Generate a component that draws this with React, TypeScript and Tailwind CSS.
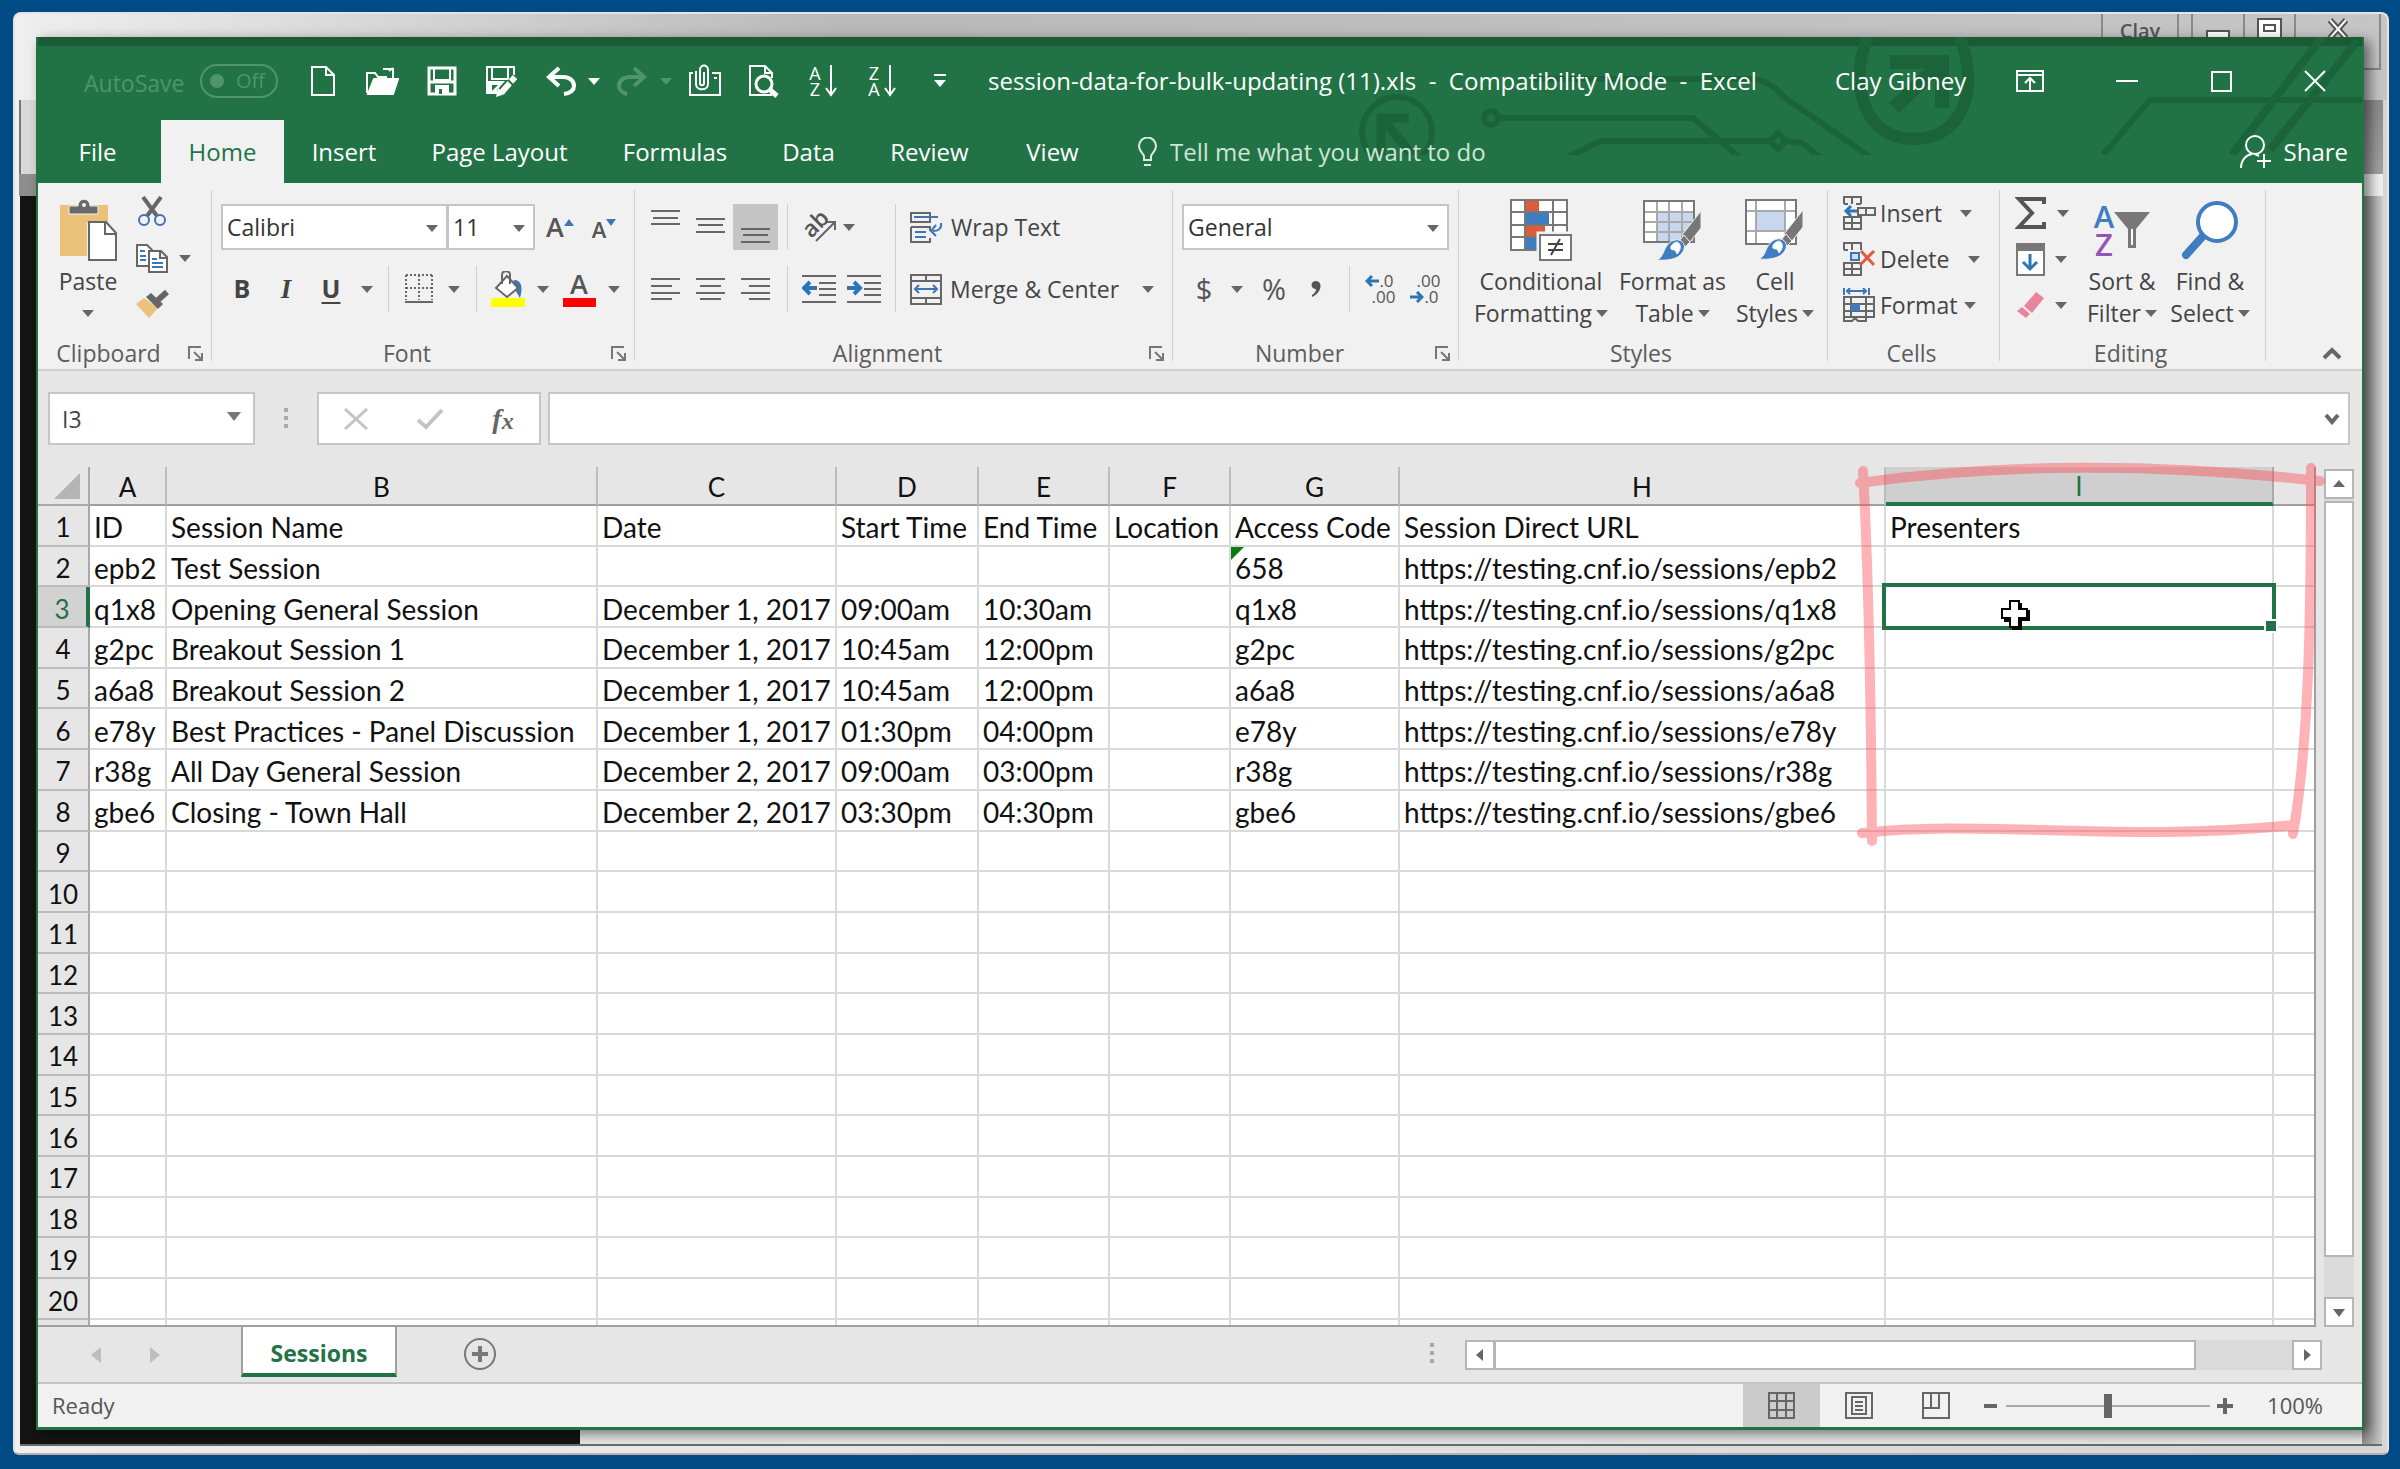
import type { ReactNode } from 'react';

const COLUMNS = [
  { id: 'A', width: 'w-[77px]' },
  { id: 'B', width: 'w-[431px]' },
  { id: 'C', width: 'w-[239px]' },
  { id: 'D', width: 'w-[142px]' },
  { id: 'E', width: 'w-[131px]' },
  { id: 'F', width: 'w-[121px]' },
  { id: 'G', width: 'w-[169px]' },
  { id: 'H', width: 'w-[486px]' },
  { id: 'I', width: 'w-[388px]' },
  { id: '', width: 'w-auto' },
];

const URL_BASE = 'https://testing.cnf.io/sessions/';

const DATA: string[][] = [
  ['ID', 'Session Name', 'Date', 'Start Time', 'End Time', 'Location', 'Access Code', 'Session Direct URL', 'Presenters'],
  ['epb2', 'Test Session', '', '', '', '', '658', URL_BASE + 'epb2'],
  ['q1x8', 'Opening General Session', 'December 1, 2017', '09:00am', '10:30am', '', 'q1x8', URL_BASE + 'q1x8'],
  ['g2pc', 'Breakout Session 1', 'December 1, 2017', '10:45am', '12:00pm', '', 'g2pc', URL_BASE + 'g2pc'],
  ['a6a8', 'Breakout Session 2', 'December 1, 2017', '10:45am', '12:00pm', '', 'a6a8', URL_BASE + 'a6a8'],
  ['e78y', 'Best Practices - Panel Discussion', 'December 1, 2017', '01:30pm', '04:00pm', '', 'e78y', URL_BASE + 'e78y'],
  ['r38g', 'All Day General Session', 'December 2, 2017', '09:00am', '03:00pm', '', 'r38g', URL_BASE + 'r38g'],
  ['gbe6', 'Closing - Town Hall', 'December 2, 2017', '03:30pm', '04:30pm', '', 'gbe6', URL_BASE + 'gbe6'],
];

const ROWS = Array.from({ length: 20 }, (_, i) => i + 1);

const TABS = [
  { name: 'File', width: 'w-[123px] pr-1' },
  { name: 'Home', width: 'w-[123px]' },
  { name: 'Insert', width: 'w-[120px]' },
  { name: 'Page Layout', width: 'w-[191px]' },
  { name: 'Formulas', width: 'w-[160px]' },
  { name: 'Data', width: 'w-[107px]' },
  { name: 'Review', width: 'w-[135px]' },
  { name: 'View', width: 'w-[111px]' },
];

function Caret({ className = 'text-[#666]' }: { className?: string }) {
  return (
    <svg width="12" height="8" viewBox="0 0 12 8" className={`shrink-0 ${className}`}>
      <path d="M0 1h12L6 8z" fill="currentColor" />
    </svg>
  );
}

function Tool({ label, width, className = '', children }: { label: string; width: string; className?: string; children: ReactNode }) {
  return (
    <button aria-label={label} className={`flex h-full shrink-0 items-center justify-center ${width} ${className}`}>
      {children}
    </button>
  );
}

function Rule({ className = '' }: { className?: string }) {
  return <div className={`w-px shrink-0 self-stretch bg-[#cfcfcf] ${className}`} />;
}

function Launcher() {
  return (
    <button aria-label="More options" className="absolute right-2 top-2">
      <svg width="15" height="15" viewBox="0 0 15 15" fill="none" stroke="#777" strokeWidth="2">
        <path d="M1 13V1h12M6 6l7 7M14 7v7H7" />
      </svg>
    </button>
  );
}

function Group({ title, width, launcher, children }: { title: string; width: string; launcher?: boolean; children: ReactNode }) {
  return (
    <>
      <section aria-label={title} className={`flex h-[178px] shrink-0 flex-col ${width}`}>
        <div className="flex-1">{children}</div>
        <div className="relative h-[30px] text-center leading-[30px] text-[#5c5c5c]">
          <span className={launcher ? 'pr-8' : 'pr-1'}>{title}</span>
          {launcher && <Launcher />}
        </div>
      </section>
      <div className="h-[171px] w-px shrink-0 bg-[#cfcfcf]" />
    </>
  );
}

function Combo({ label, value, className }: { label: string; value: string; className: string }) {
  return (
    <div className={`relative h-[46px] shrink-0 border-2 border-[#c6c6c6] bg-white ${className}`}>
      <select aria-label={label} defaultValue={value} className="h-full w-full appearance-none bg-transparent pl-1 text-[#333] outline-none">
        <option>{value}</option>
      </select>
      <Caret className="pointer-events-none absolute right-2 top-[18px] text-[#666]" />
    </div>
  );
}

function BigButton({ icon, top, bottom, width }: { icon: ReactNode; top: string; bottom: string; width: string }) {
  return (
    <button className={`flex shrink-0 flex-col items-center whitespace-nowrap leading-8 text-[#444] ${width}`}>
      <span className="flex h-[75px] items-center pt-1">{icon}</span>
      <span>{top}</span>
      <span className="flex items-center gap-1">
        {bottom}
        <Caret />
      </span>
    </button>
  );
}

function Lines({ d }: { d: string }) {
  return (
    <svg width="45" height="46" viewBox="0 0 45 46" stroke="#666" strokeWidth="2" fill="none">
      <path d={d} />
    </svg>
  );
}

/* ---------- title bar ---------- */

function TitleArt() {
  return (
    <svg
      className="pointer-events-none absolute right-0 top-0"
      width="1008"
      height="118"
      viewBox="1354 37 1008 118"
      fill="none"
      stroke="#1b6439"
      strokeWidth="6"
    >
      <circle cx="1397" cy="132" r="35" />
      <path d="M1381 155v-37h28M1384 121l30 36" strokeWidth="9" />
      <circle cx="1491" cy="118" r="7" />
      <path d="M1499 118h194l47 40M1566 158l34-17h172M1786 141l16 2 18 14M1530 79h224q16 2 30 18l86 60" />
      <path d="M1778 133l8 8-8 8-8-8z" />
      <path d="M1868 37q-12 28-7 56c6 28 24 46 53 46s48-18 53-46q4-30-8-56" strokeWidth="12" />
      <path d="M1890 62h52v46M1938 66l-44 42" strokeWidth="14" />
      <path d="M2103 155l47-55h212" />
      <path d="M2322 37l-90 118M2358 40l-88 110" strokeWidth="8" />
    </svg>
  );
}

function SortArrow() {
  return (
    <svg width="12" height="32" viewBox="0 0 12 32" fill="none" stroke="#fff" strokeWidth="2">
      <path d="M6 0v30M1 23l5 7 5-7" />
    </svg>
  );
}

function TitleBar() {
  return (
    <header className="relative flex h-[74px] shrink-0 items-center pb-1 text-white">
      <div className="flex h-full items-center pl-[46px]">
        <label htmlFor="autosave" className="w-[116px] pt-1 text-[23px] text-[#4f9569]">
          AutoSave
        </label>
        <button id="autosave" className="flex h-[34px] w-[78px] items-center gap-3 rounded-full border-2 border-[#4f9569] pl-2 text-[20px] text-[#4f9569]">
          <span className="size-[14px] shrink-0 rounded-full bg-[#4f9569]" />
          Off
        </button>
        <Tool label="New" width="w-[58px]" className="ml-[16px]">
          <svg width="26" height="32" viewBox="0 0 26 32" fill="none" stroke="#fff" strokeWidth="2">
            <path d="M2 2h14l8 8v20H2zM16 2v8h8" />
          </svg>
        </Tool>
        <Tool label="Open" width="w-[60px]">
          <svg width="34" height="30" viewBox="0 0 34 30" fill="none" stroke="#fff" strokeWidth="2">
            <path d="M2 27V7h8l3 4h9M18 3h10v9M24 5l4-3" />
            <path d="M9 13h24l-5 15H3z" fill="#fff" />
          </svg>
        </Tool>
        <Tool label="Save" width="w-[59px]">
          <svg width="30" height="30" viewBox="0 0 30 30" fill="none" stroke="#fff" strokeWidth="3">
            <path d="M2 2h26v26H2zM2 16h26" />
            <path d="M7 3v11h16V3" strokeWidth="2" />
            <path d="M8 19h14v9H8z" fill="#fff" stroke="none" />
            <path d="M12 23h3v5h-3z" fill="#217346" stroke="none" />
          </svg>
        </Tool>
        <Tool label="Save As" width="w-[59px]">
          <svg width="32" height="32" viewBox="0 0 32 32" fill="none" stroke="#fff" strokeWidth="3">
            <path d="M29 10V2H2v26h10M7 3v11h16V3" strokeWidth="2" />
            <path d="M3 16h17l-8 9v4H3z" fill="#fff" stroke="none" />
            <path d="M7 20h6l-6 6z" fill="#217346" stroke="none" />
            <path d="M30 12L17 27" strokeWidth="6" />
            <path d="M23 15l5 5" stroke="#217346" strokeWidth="2" />
            <path d="M11 32l2-9 7 6z" fill="#fff" stroke="none" />
          </svg>
        </Tool>
        <Tool label="Undo" width="w-[54px]" className="ml-1">
          <svg width="32" height="30" viewBox="0 0 32 30" fill="none" stroke="#fff" strokeWidth="4">
            <path d="M14 2L4 11l10 9M5 11h13c7 0 11 4 11 9 0 4-4 7-10 8" />
          </svg>
        </Tool>
        <Tool label="Undo list" width="w-[12px]">
          <Caret className="text-white" />
        </Tool>
        <Tool label="Redo" width="w-[56px]" className="ml-1">
          <svg width="32" height="30" viewBox="0 0 32 30" fill="none" stroke="#4f9569" strokeWidth="4">
            <path d="M18 2l10 9-10 9M27 11H14C7 11 3 15 3 20c0 4 4 7 8 8" />
          </svg>
        </Tool>
        <Tool label="Redo list" width="w-[12px]">
          <Caret className="text-[#4f9569]" />
        </Tool>
        <Tool label="Attach" width="w-[58px]" className="ml-1">
          <svg width="34" height="34" viewBox="0 0 34 34" fill="none" stroke="#fff" strokeWidth="2">
            <path d="M5 9H2v22h30V9h-8M26 14h3M16 8v11c0 3-4 3-4 0V6c0-6 8-6 8 0v14c0 7-12 7-12 0V7" />
          </svg>
        </Tool>
        <Tool label="Print Preview" width="w-[60px]">
          <svg width="32" height="34" viewBox="0 0 32 34" fill="none" stroke="#fff" strokeWidth="2">
            <path d="M24 31H2V2h15l7 7v5M17 2v7h7" />
            <circle cx="16" cy="20" r="8" strokeWidth="3" fill="#217346" />
            <path d="M21 25l8 7" strokeWidth="5" />
          </svg>
        </Tool>
        <Tool label="Sort Ascending" width="w-[58px]" className="gap-1">
          <span className="flex flex-col text-[18px] leading-4">
            <span>A</span>
            <span>Z</span>
          </span>
          <SortArrow />
        </Tool>
        <Tool label="Sort Descending" width="w-[60px]" className="gap-1">
          <span className="flex flex-col text-[18px] leading-4">
            <span>Z</span>
            <span>A</span>
          </span>
          <SortArrow />
        </Tool>
        <Tool label="Customize toolbar" width="w-[56px]">
          <svg width="12" height="14" viewBox="0 0 12 14" fill="#fff">
            <path d="M0 0h12v2H0zM0 6h12l-6 7z" />
          </svg>
        </Tool>
      </div>
      <h1 className="flex-1 whitespace-pre pl-[20px] text-[24px]">session-data-for-bulk-updating (11).xls  -  Compatibility Mode  -  Excel</h1>
      <span className="w-[145px] text-[24px]">Clay Gibney</span>
      <Tool label="Ribbon Display Options" width="w-[100px]">
        <svg width="28" height="22" viewBox="0 0 28 22" fill="none" stroke="#fff" strokeWidth="2">
          <path d="M1 1h26v20H1zM1 5h26M14 21V9M9 13l5-5 5 5" />
        </svg>
      </Tool>
      <Tool label="Minimize" width="w-[94px]">
        <span className="h-[2px] w-[22px] bg-white" />
      </Tool>
      <Tool label="Maximize" width="w-[94px]">
        <span className="size-[21px] border-2 border-white" />
      </Tool>
      <Tool label="Close" width="w-[94px]">
        <svg width="22" height="22" viewBox="0 0 22 22" stroke="#fff" strokeWidth="2">
          <path d="M1 1l20 20M21 1L1 21" />
        </svg>
      </Tool>
    </header>
  );
}

function TabStrip() {
  return (
    <nav className="relative flex h-[63px] shrink-0 items-stretch text-[24px] text-white">
      {TABS.map((tab) => (
        <button
          key={tab.name}
          className={`shrink-0 whitespace-nowrap ${tab.width} ${tab.name === 'Home' ? 'bg-[#f1f1f1] text-[#217346]' : ''}`}
        >
          {tab.name}
        </button>
      ))}
      <label className="flex flex-1 items-center gap-3 pl-[29px]">
        <svg width="21" height="30" viewBox="0 0 21 30" fill="none" stroke="#dcebe2" strokeWidth="2">
          <path d="M7 23v-4c-1-3-5-5-5-10a8 8 0 0 1 17 0c0 5-4 7-5 10v4zM7 28h7" />
        </svg>
        <input aria-label="Tell me" placeholder="Tell me what you want to do" className="w-[420px] bg-transparent outline-none placeholder:text-[#d0e4d8]" />
      </label>
      <button className="flex items-center gap-3 pr-[14px]">
        <svg width="32" height="34" viewBox="0 0 32 34" fill="none" stroke="#fff" strokeWidth="2">
          <circle cx="15" cy="10" r="9" />
          <path d="M1 33c0-8 5-13 11-14M15 19l4 2M17 26h14M24 19v14" />
        </svg>
        Share
      </button>
    </nav>
  );
}

/* ---------- ribbon ---------- */

function ClipboardGroup() {
  return (
    <Group title="Clipboard" width="w-[173px]" launcher>
      <div className="flex">
        <button className="ml-[17px] flex w-[66px] flex-col items-center leading-8 text-[#444]">
          <span className="flex h-[75px] items-center pt-1">
            <svg width="58" height="62" viewBox="0 0 58 62">
              <path d="M1 6h48v18H28v33H1z" fill="#ecc27b" />
              <path d="M10 15V7h9c0-9 12-9 12 0h8v8z" fill="#6a6a6a" stroke="#f1f1f1" />
              <circle cx="25" cy="6" r="2" fill="#f1f1f1" />
              <path d="M30 23h17l10 11v27H30z" fill="#fff" stroke="#666" strokeWidth="2" />
              <path d="M46 23v12h11" fill="none" stroke="#666" strokeWidth="2" />
            </svg>
          </span>
          <span>Paste</span>
          <Caret className="mt-3 text-[#666]" />
        </button>
        <div className="flex flex-col pl-[8px]">
          <div className="flex h-[42px] items-center">
            <Tool label="Cut" width="w-[46px]">
              <svg width="30" height="31" viewBox="0 0 30 31" fill="none">
                <path d="M6 1l14 19M24 1L10 20" stroke="#666" strokeWidth="4" />
                <circle cx="7" cy="24" r="5" stroke="#3f74b5" strokeWidth="2" />
                <circle cx="23" cy="24" r="5" stroke="#3f74b5" strokeWidth="2" />
              </svg>
            </Tool>
          </div>
          <div className="flex h-[52px] items-center">
            <Tool label="Copy" width="w-[46px]">
              <svg width="32" height="29" viewBox="0 0 32 29" fill="#fff" stroke="#666" strokeWidth="2">
                <path d="M1 1h10l5 5v16H1z" />
                <path d="M13 7h12l6 6v15H13zM24 7v7h7" />
                <path d="M4 7h5M4 12h6M4 16h6M16 15h5M16 19h11M16 23h11" stroke="#3f74b5" />
              </svg>
            </Tool>
            <Caret className="ml-1 text-[#666]" />
          </div>
          <div className="flex h-[40px] items-center">
            <Tool label="Format Painter" width="w-[46px]">
              <svg width="33" height="28" viewBox="0 0 33 28">
                <path d="M0 14l8-6 14 10-9 10z" fill="#ecc27b" />
                <path d="M10 7l5-4 12 11-5 5z" fill="#666" />
                <path d="M31 2l-9 8" stroke="#666" strokeWidth="6" />
              </svg>
            </Tool>
          </div>
        </div>
      </div>
    </Group>
  );
}

function FontGroup() {
  return (
    <Group title="Font" width="w-[422px]" launcher>
      <div className="flex flex-col gap-4 pt-[14px]">
        <div className="flex h-[46px] items-center pl-[9px]">
          <Combo label="Font" value="Calibri" className="w-[227px]" />
          <Combo label="Font size" value="11" className="-ml-px w-[88px]" />
          <Tool label="Increase Font Size" width="w-[46px]" className="pl-1">
            <span className="text-[27px] font-semibold leading-8 text-[#555]">A</span>
            <svg width="10" height="7" viewBox="0 0 10 7" className="mb-6 self-end">
              <path d="M5 0l5 7H0z" fill="#3f74b5" />
            </svg>
          </Tool>
          <Tool label="Decrease Font Size" width="w-[46px]">
            <span className="pt-1 text-[22px] font-semibold leading-8 text-[#555]">A</span>
            <svg width="10" height="7" viewBox="0 0 10 7" className="mb-6 self-end">
              <path d="M0 0h10L5 7z" fill="#3f74b5" />
            </svg>
          </Tool>
        </div>
        <div className="flex h-[46px] items-center pl-[8px] text-[25px] text-[#444]">
          <Tool label="Bold" width="w-[44px]" className="font-bold">
            B
          </Tool>
          <Tool label="Italic" width="w-[44px]" className="font-['Liberation_Serif'] text-[27px] font-bold italic">
            I
          </Tool>
          <Tool label="Underline" width="w-[46px]" className="font-bold underline decoration-2 underline-offset-4">
            U
          </Tool>
          <Tool label="Underline styles" width="w-[26px]">
            <Caret />
          </Tool>
          <Rule className="ml-[8px] mr-[8px]" />
          <Tool label="Borders" width="w-[44px]">
            <svg width="28" height="30" viewBox="0 0 28 30" fill="none" stroke="#666" strokeWidth="2">
              <path d="M1 1h27M1 14h27M1 1v25M14 1v25M27 1v25" strokeDasharray="2 2" />
              <path d="M0 28h28" />
            </svg>
          </Tool>
          <Tool label="Border styles" width="w-[26px]">
            <Caret />
          </Tool>
          <Rule className="ml-[9px] mr-[8px]" />
          <Tool label="Fill Color" width="w-[46px]">
            <svg width="34" height="36" viewBox="0 0 34 36">
              <path d="M23 9c8 0 9 8 6 18-3-5-4-8-8-10z" fill="#3f74b5" />
              <path d="M5 17L16 5l11 12-11 9z" fill="#fff" stroke="#666" strokeWidth="2" />
              <path d="M11 13V4c0-5 8-5 8 0v9" fill="none" stroke="#666" strokeWidth="2" />
              <path d="M0 27h34v9H0z" fill="#ff0" />
            </svg>
          </Tool>
          <Tool label="Fill colors" width="w-[24px]">
            <Caret />
          </Tool>
          <Tool label="Font Color" width="w-[48px]" className="flex-col">
            <span className="h-[27px] text-[27px] font-semibold leading-[25px] text-[#555]">A</span>
            <span className="h-[9px] w-[33px] bg-[#f00]" />
          </Tool>
          <Tool label="Font colors" width="w-[22px]">
            <Caret />
          </Tool>
        </div>
      </div>
    </Group>
  );
}

function AlignmentGroup() {
  return (
    <Group title="Alignment" width="w-[537px]" launcher>
      <div className="flex pt-[14px]">
        <div className="flex w-[252px] flex-col gap-4 pl-[8px]">
          <div className="flex h-[46px]">
            <Tool label="Top Align" width="w-[45px]">
              <Lines d="M8 7h29M10 14h25M8 20h29" />
            </Tool>
            <Tool label="Middle Align" width="w-[45px]">
              <Lines d="M8 15h29M10 21h25M8 28h29" />
            </Tool>
            <Tool label="Bottom Align" width="w-[45px]" className="bg-[#c5c5c5]">
              <Lines d="M8 25h29M10 31h25M8 38h29" />
            </Tool>
            <Rule className="ml-[9px] mr-[8px]" />
            <Tool label="Orientation" width="w-[45px]" className="relative">
              <span className="-rotate-45 pb-3 text-[23px] font-semibold leading-5 text-[#555]">ab</span>
              <svg width="22" height="22" viewBox="0 0 22 22" className="absolute bottom-2 right-1" fill="none" stroke="#666" strokeWidth="2">
                <path d="M1 21L20 2M12 2h8v8" />
              </svg>
            </Tool>
            <Tool label="Orientations" width="w-[16px]">
              <Caret />
            </Tool>
          </div>
          <div className="flex h-[46px]">
            <Tool label="Align Left" width="w-[45px]">
              <Lines d="M8 13h29M8 20h21M8 27h29M8 33h21" />
            </Tool>
            <Tool label="Center" width="w-[45px]">
              <Lines d="M8 13h29M12 20h21M8 27h29M12 33h21" />
            </Tool>
            <Tool label="Align Right" width="w-[45px]">
              <Lines d="M8 13h29M16 20h21M8 27h29M16 33h21" />
            </Tool>
            <Rule className="ml-[9px] mr-[8px]" />
            <Tool label="Decrease Indent" width="w-[45px]">
              <svg width="34" height="28" viewBox="0 0 34 28" fill="none" stroke="#666" strokeWidth="2">
                <path d="M0 1h34M17 8h17M17 14h17M17 20h17M0 27h34" />
                <path d="M15 13H3M8 7l-6 6 6 6" stroke="#2e75b6" strokeWidth="4" />
              </svg>
            </Tool>
            <Tool label="Increase Indent" width="w-[45px]">
              <svg width="34" height="28" viewBox="0 0 34 28" fill="none" stroke="#666" strokeWidth="2">
                <path d="M0 1h34M17 8h17M17 14h17M17 20h17M0 27h34" />
                <path d="M0 13h12M7 7l6 6-6 6" stroke="#2e75b6" strokeWidth="4" />
              </svg>
            </Tool>
          </div>
        </div>
        <Rule className="ml-[8px]" />
        <div className="flex flex-col gap-4 pl-[14px] text-[#444]">
          <button className="flex h-[46px] items-center gap-2">
            <svg width="33" height="31" viewBox="0 0 33 31" fill="none" stroke="#666" strokeWidth="2">
              <path d="M20 5V1H1v9h19V6M1 15h19v4M20 26v4H1V15" />
              <path d="M4 5h24M5 20h11M5 25h11M31 11c1 6-3 8-8 8M26 13l-5 6 5 5" stroke="#3f74b5" />
            </svg>
            Wrap Text
          </button>
          <button className="flex h-[46px] items-center gap-2">
            <svg width="32" height="31" viewBox="0 0 32 31" fill="none" stroke="#666" strokeWidth="2">
              <path d="M1 1h30v29H1zM1 7h30M1 24h30M16 1v6M16 24v6" />
              <path d="M6 15h20M9 11l-4 4 4 4M23 11l4 4-4 4" stroke="#3f74b5" />
            </svg>
            <span className="w-[184px] text-left">Merge &amp; Center</span>
            <Caret />
          </button>
        </div>
      </div>
    </Group>
  );
}

function NumberGroup() {
  return (
    <Group title="Number" width="w-[285px]" launcher>
      <div className="flex flex-col gap-4 pl-[9px] pt-[14px]">
        <Combo label="Number Format" value="General" className="w-[267px]" />
        <div className="flex h-[46px] items-center text-[29px] text-[#555]">
          <Tool label="Accounting" width="w-[44px]">
            $
          </Tool>
          <Tool label="Currencies" width="w-[22px]">
            <Caret />
          </Tool>
          <Tool label="Percent Style" width="w-[52px]">
            %
          </Tool>
          <Tool label="Comma Style" width="w-[32px]">
            <svg width="10" height="16" viewBox="0 0 10 16" fill="#555">
              <path d="M5 0c7 0 6 12-4 16v-2c3-2 4-4 4-6C-1 8-1 0 5 0z" />
            </svg>
          </Tool>
          <Rule className="ml-[17px] mr-[7px]" />
          <Tool label="Increase Decimal" width="w-[45px]" className="flex-col text-[17px] leading-4">
            <span className="flex items-center">
              <svg width="14" height="12" viewBox="0 0 14 12" fill="none" stroke="#2e75b6" strokeWidth="3">
                <path d="M14 6H2M7 1L2 6l5 5" />
              </svg>
              .0
            </span>
            <span className="pl-2">.00</span>
          </Tool>
          <Tool label="Decrease Decimal" width="w-[45px]" className="flex-col text-[17px] leading-4">
            <span className="pl-2">.00</span>
            <span className="flex items-center">
              <svg width="14" height="12" viewBox="0 0 14 12" fill="none" stroke="#2e75b6" strokeWidth="3">
                <path d="M0 6h12M7 1l5 5-5 5" />
              </svg>
              .0
            </span>
          </Tool>
        </div>
      </div>
    </Group>
  );
}

function Brush() {
  return (
    <g stroke="#f1f1f1">
      <path d="M58 11v17L47 42l-8-7z" fill="#777" />
      <path d="M41 35l6 7-5 5-6-6z" fill="#777" />
      <path d="M36 40c6 2 7 8 3 13-4 6-14 8-25 7 6-3 6-8 9-13s8-8 13-7z" fill="#3f7cc0" />
      <path d="M34 42c-5 1-7 5-6 7 2 2 4-1 6 5 4-4 5-10 0-12z" fill="#fff" />
    </g>
  );
}

function StylesGroup() {
  return (
    <Group title="Styles" width="w-[368px]">
      <div className="flex pl-[8px]">
        <BigButton
          width="w-[148px]"
          top="Conditional"
          bottom="Formatting"
          icon={
            <svg width="62" height="62" viewBox="0 0 62 62">
              <path d="M1 1h56v50H1z" fill="#fff" />
              <path d="M16 2h13v11H16zM16 27h19v11H16z" fill="#dc5c3b" />
              <path d="M16 14h23v12H16zM16 39h12v11H16z" fill="#3f7cc0" />
              <path d="M1 1h56v50H1zM1 13h56M1 26h56M1 38h56M15 1v50M43 1v50" fill="none" stroke="#777" strokeWidth="2" />
              <path d="M29 35h32v26H29z" fill="#fff" stroke="#f1f1f1" strokeWidth="5" />
              <path d="M30 36h31v25H30z" fill="#fff" stroke="#777" strokeWidth="2" />
              <path d="M38 45h15M38 51h15M50 40l-9 16" stroke="#444" strokeWidth="2" />
            </svg>
          }
        />
        <BigButton
          width="w-[115px]"
          top="Format as"
          bottom="Table"
          icon={
            <svg width="60" height="60" viewBox="0 0 60 60">
              <path d="M1 1h50v41H1z" fill="#fff" />
              <path d="M14 12h37v30H14z" fill="#c9d7ee" />
              <path d="M1 12h50M1 22h50M1 32h50M14 1v41M26 1v41M39 1v41" stroke="#a9a9a9" strokeWidth="2" />
              <path d="M1 1h50v41H1z" fill="none" stroke="#777" strokeWidth="2" />
              <Brush />
            </svg>
          }
        />
        <BigButton
          width="w-[90px]"
          top="Cell"
          bottom="Styles"
          icon={
            <svg width="60" height="62" viewBox="0 0 60 62">
              <path d="M1 1h50v44H1z" fill="#fff" />
              <path d="M12 12h28v20H12z" fill="#c9d7ee" />
              <path d="M1 12h50M1 32h50M11 1v44M40 1v44" stroke="#a9a9a9" strokeWidth="2" />
              <path d="M1 1h50v44H1z" fill="none" stroke="#777" strokeWidth="2" />
              <Brush />
            </svg>
          }
        />
      </div>
    </Group>
  );
}

function CellsGroup() {
  return (
    <Group title="Cells" width="w-[171px]">
      <div className="flex flex-col pl-[15px] text-[#444]">
        <button className="flex h-[46px] items-center">
          <svg width="33" height="34" viewBox="0 0 33 34" fill="none" stroke="#666" strokeWidth="2">
            <path d="M1 8V1h17v7M9 1v7M1 8h4M13 8h5M1 21h17v12H1zM9 21v12M1 27h17M15 12h17v7H15zM23 12v7" />
            <path d="M14 15H3M8 10l-5 5 5 5" stroke="#2e75b6" strokeWidth="3" />
          </svg>
          <span className="w-[80px] pl-1 text-left">Insert</span>
          <Caret className="ml-1 text-[#666]" />
        </button>
        <button className="flex h-[46px] items-center">
          <svg width="33" height="34" viewBox="0 0 33 34" fill="none" stroke="#666" strokeWidth="2">
            <path d="M1 8V1h17v7M9 1v7M1 8h4M1 21h17v12H1zM9 21v12M1 27h17" />
            <path d="M8 11h8v7H8z" fill="#cde3f3" stroke="#3f74b5" />
            <path d="M18 9l13 14M31 9L17 23" stroke="#dc5c3b" strokeWidth="3" />
          </svg>
          <span className="w-[88px] pl-1 text-left">Delete</span>
          <Caret className="ml-1 text-[#666]" />
        </button>
        <button className="flex h-[46px] items-center">
          <svg width="33" height="34" viewBox="0 0 33 34" fill="none" stroke="#666" strokeWidth="2">
            <path d="M1 9h30v20H1zM1 16h30M1 23h30M8 9v20M23 9v20M1 29v4h8l3-3 3 3h8v-4" />
            <path d="M8 16h9v7H8z" fill="#3f7cc0" stroke="none" />
            <path d="M1 0v7M26 0v7M3 3h21M7 0L4 3l3 3M20 0l3 3-3 3" stroke="#3f74b5" />
          </svg>
          <span className="w-[88px] pl-1 text-left">Format</span>
          <Caret />
        </button>
      </div>
    </Group>
  );
}

function EditingGroup() {
  return (
    <Group title="Editing" width="w-[265px]">
      <div className="flex pl-[10px]">
        <div className="flex w-[68px] flex-col">
          <div className="flex h-[46px] items-center">
            <Tool label="AutoSum" width="w-[40px]">
              <svg width="31" height="34" viewBox="0 0 31 34" fill="none" stroke="#555" strokeWidth="4">
                <path d="M29 8V3H4l13 14L4 31h25v-5" />
              </svg>
            </Tool>
            <Tool label="Sum functions" width="w-[26px]">
              <Caret />
            </Tool>
          </div>
          <div className="flex h-[46px] items-center">
            <Tool label="Fill" width="w-[40px]">
              <svg width="29" height="33" viewBox="0 0 29 33" fill="none">
                <path d="M1 1h27v31H1z" fill="#fff" stroke="#777" strokeWidth="2" />
                <path d="M0 0h29v8H0z" fill="#777" />
                <path d="M14 11v15M7 19l7 7 7-7" stroke="#2e75b6" strokeWidth="3" />
              </svg>
            </Tool>
            <Tool label="Fill options" width="w-[22px]">
              <Caret />
            </Tool>
          </div>
          <div className="flex h-[46px] items-center">
            <Tool label="Clear" width="w-[40px]">
              <svg width="27" height="26" viewBox="0 0 27 26" fill="#e8859b">
                <path d="M19 0l8 6-12 15-8-7z" />
                <path d="M5 15l8 7-4 4-9-7z" />
              </svg>
            </Tool>
            <Tool label="Clear options" width="w-[22px]">
              <Caret />
            </Tool>
          </div>
        </div>
        <BigButton
          width="w-[88px]"
          top="Sort &"
          bottom="Filter"
          icon={
            <span className="flex items-center">
              <span className="flex flex-col text-center text-[31px] font-semibold leading-[28px]">
                <span className="text-[#3f7cc0]">A</span>
                <span className="text-[#9355b8]">Z</span>
              </span>
              <svg width="36" height="36" viewBox="0 0 36 36">
                <path d="M0 0h36L22 17v19h-8V17z" fill="#777" />
                <path d="M17 17h2v16h-2z" fill="#fff" />
              </svg>
            </span>
          }
        />
        <BigButton
          width="w-[88px]"
          top="Find &"
          bottom="Select"
          icon={
            <svg width="58" height="60" viewBox="0 0 58 60" stroke="#3f7cc0">
              <path d="M22 36L5 55" strokeWidth="8" strokeLinecap="round" />
              <circle cx="36" cy="22" r="19" fill="#fff" strokeWidth="4" />
            </svg>
          }
        />
      </div>
    </Group>
  );
}

function Ribbon() {
  return (
    <div className="flex h-[188px] shrink-0 items-start border-b-2 border-[#d0d0d0] bg-[#f1f1f1] pt-[7px] text-[23px]">
      <ClipboardGroup />
      <FontGroup />
      <AlignmentGroup />
      <NumberGroup />
      <StylesGroup />
      <CellsGroup />
      <EditingGroup />
      <div className="flex h-[178px] flex-1 items-end justify-end pb-2 pr-5">
        <button aria-label="Collapse the Ribbon">
          <svg width="20" height="14" viewBox="0 0 20 14" fill="none" stroke="#666" strokeWidth="4">
            <path d="M2 12l8-8 8 8" />
          </svg>
        </button>
      </div>
    </div>
  );
}

/* ---------- formula bar ---------- */

function FormulaBar() {
  return (
    <div className="flex h-[96px] shrink-0 items-start bg-[#e6e6e6] pl-[10px] pr-[12px] pt-[21px] text-[23px]">
      <div className="relative h-[53px] w-[207px] border-2 border-[#c6c6c6] bg-white">
        <input aria-label="Name Box" defaultValue="I3" className="h-full w-full bg-transparent pl-3 text-[#444] outline-none" />
        <button aria-label="Names" className="absolute right-3 top-[18px] text-[#777]">
          <svg width="14" height="9" viewBox="0 0 14 9">
            <path d="M0 0h14L7 9z" fill="currentColor" />
          </svg>
        </button>
      </div>
      <Dots className="w-[62px]" />
      <div className="flex h-[53px] w-[224px] items-center border-2 border-[#c6c6c6] bg-white">
        <Tool label="Cancel" width="w-[74px]">
          <svg width="24" height="22" viewBox="0 0 24 22" stroke="#c4c4c4" strokeWidth="3">
            <path d="M1 1l22 20M23 1L1 21" />
          </svg>
        </Tool>
        <Tool label="Enter" width="w-[74px]">
          <svg width="28" height="22" viewBox="0 0 28 22" fill="none" stroke="#c4c4c4" strokeWidth="4">
            <path d="M2 12l8 7L26 2" />
          </svg>
        </Tool>
        <Tool label="Insert Function" width="w-[72px]" className="font-['Liberation_Serif'] text-[28px] font-bold italic text-[#666]">
          f<span className="pt-1 text-[24px]">x</span>
        </Tool>
      </div>
      <div className="ml-[7px] flex h-[53px] flex-1 items-center border-2 border-[#c6c6c6] bg-white pr-2">
        <input aria-label="Formula" className="h-full flex-1 bg-transparent px-3 outline-none" />
        <button aria-label="Expand Formula Bar">
          <svg width="16" height="12" viewBox="0 0 16 12" fill="none" stroke="#666" strokeWidth="4">
            <path d="M2 2l6 7 6-7" />
          </svg>
        </button>
      </div>
    </div>
  );
}

function Dots({ className }: { className: string }) {
  return (
    <div className={`flex flex-col items-center gap-1 self-start pt-4 ${className}`}>
      <span className="size-1 bg-[#a9a9a9]" />
      <span className="size-1 bg-[#a9a9a9]" />
      <span className="size-1 bg-[#a9a9a9]" />
    </div>
  );
}

/* ---------- sheet ---------- */

function SelectionBox() {
  return (
    <>
      <span className="absolute -bottom-[4px] -left-[4px] -right-[4px] -top-[4px] z-10 border-4 border-[#217346]" />
      <span className="absolute -bottom-[7px] -right-[6px] z-10 size-[14px] border-2 border-white bg-[#217346]" />
      <svg width="32" height="32" viewBox="0 0 32 32" className="absolute left-[114px] top-[12px] z-20">
        <path d="M12 4h10v7h8v11h-8v9H12v-8H4V11h8z" fill="#000" />
        <path d="M10 2h9v8h8v9h-8v9h-9v-9H2v-9h8z" fill="#fff" stroke="#000" strokeWidth="2" />
      </svg>
    </>
  );
}

function Sheet() {
  return (
    <table className="h-full w-full table-fixed border-separate border-spacing-0 border-b-2 border-r-2 border-[#a0a0a0] bg-white font-['Lato',sans-serif] text-[28px] leading-8 text-[#111]">
      <colgroup>
        <col className="w-[52px]" />
        {COLUMNS.map((col) => (
          <col key={col.id} className={col.width} />
        ))}
      </colgroup>
      <thead>
        <tr className="h-[39px] bg-[#e6e6e6] text-[26px]">
          <th className="border-b-2 border-r-2 border-[#a9a9a9] p-0">
            <svg width="26" height="26" viewBox="0 0 26 26" className="ml-auto mr-2">
              <path d="M26 0v26H0z" fill="#b4b4b4" />
            </svg>
          </th>
          {COLUMNS.map((col) => (
            <th
              key={col.id}
              className={
                col.id === 'I'
                  ? 'border-b-4 border-r-2 border-b-[#217346] border-r-[#a9a9a9] bg-[#cfcfcf] p-0 pt-[2px] font-normal text-[#217346]'
                  : 'border-b-2 border-r-2 border-b-[#a0a0a0] border-r-[#bcbcbc] p-0 pt-[2px] font-normal last:border-r-0'
              }
            >
              {col.id}
            </th>
          ))}
        </tr>
      </thead>
      <tbody>
        {ROWS.map((row) => (
          <tr key={row}>
            <th
              className={
                row === 3
                  ? 'border-b-2 border-r-4 border-b-[#bcbcbc] border-r-[#217346] bg-[#d2d2d2] p-0 pt-1 text-[26px] font-normal text-[#217346]'
                  : 'border-b-2 border-r-2 border-b-[#bcbcbc] border-r-[#a9a9a9] bg-[#e6e6e6] p-0 pt-1 text-[26px] font-normal'
              }
            >
              {row}
            </th>
            {COLUMNS.map((col, c) => (
              <td key={col.id} className="relative whitespace-nowrap border-b-2 border-r-2 border-[#d9d9d9] p-0 pl-1 pt-1 last:border-r-0">
                {DATA[row - 1]?.[c]}
                {row === 2 && col.id === 'G' && (
                  <svg width="13" height="13" viewBox="0 0 13 13" className="absolute left-0 top-0">
                    <path d="M0 0h13L0 13z" fill="#0f7b0f" />
                  </svg>
                )}
                {row === 3 && col.id === 'I' && <SelectionBox />}
              </td>
            ))}
          </tr>
        ))}
        <tr className="h-[5px]">
          <th className="border-r-2 border-[#a9a9a9] bg-[#e6e6e6] p-0" />
          {COLUMNS.map((col) => (
            <td key={col.id} className="border-r-2 border-[#d9d9d9] p-0 last:border-r-0" />
          ))}
        </tr>
      </tbody>
    </table>
  );
}

function Highlight() {
  return (
    <svg
      className="pointer-events-none absolute -top-2 left-[1812px] z-20"
      width="480"
      height="400"
      viewBox="1850 458 480 400"
      fill="none"
      stroke="#ff4a52"
      strokeWidth="10"
      strokeLinecap="round"
    >
      <g opacity="0.42">
        <path d="M1863 470C1868 560 1871 700 1872 840" />
        <path d="M1860 482C2000 462 2160 462 2320 480" />
        <path d="M2311 467C2311 620 2309 740 2293 833" />
        <path d="M1862 832C1980 818 2120 842 2294 824" />
      </g>
    </svg>
  );
}

function ScrollArrow({ label, d }: { label: string; d: string }) {
  return (
    <button aria-label={label} className="flex size-[30px] shrink-0 items-center justify-center border-2 border-[#b5b5b5] bg-white">
      <svg width="14" height="14" viewBox="0 0 14 14" fill="#666">
        <path d={d} />
      </svg>
    </button>
  );
}

function SheetTabs() {
  return (
    <div className="flex h-[57px] shrink-0 items-start border-b-2 border-[#c6c6c6] bg-[#e6e6e6] pr-[40px]">
      <button aria-label="Previous sheet" className="ml-[53px] mt-[20px]">
        <svg width="10" height="16" viewBox="0 0 10 16" fill="#bdbdbd">
          <path d="M10 0v16L0 8z" />
        </svg>
      </button>
      <button aria-label="Next sheet" className="ml-[49px] mt-[20px]">
        <svg width="10" height="16" viewBox="0 0 10 16" fill="#bdbdbd">
          <path d="M0 0v16l10-8z" />
        </svg>
      </button>
      <button className="-mt-[2px] ml-[81px] h-[52px] w-[156px] border-x-2 border-b-4 border-x-[#a0a0a0] border-b-[#217346] bg-white pt-2 text-[23px] font-bold text-[#217346]">
        Sessions
      </button>
      <button aria-label="New sheet" className="ml-[66px] mt-[10px]">
        <svg width="34" height="34" viewBox="0 0 34 34" fill="none" stroke="#777" strokeWidth="2">
          <circle cx="17" cy="17" r="15" />
          <path d="M17 9v16M9 17h16" strokeWidth="4" />
        </svg>
      </button>
      <div className="flex-1" />
      <Dots className="w-[66px]" />
      <div className="mt-[13px] flex w-[857px] bg-[#dadada]">
        <ScrollArrow label="Scroll left" d="M10 1v12L3 7z" />
        <div className="-ml-px h-[30px] w-[702px] border-2 border-[#b5b5b5] bg-white" />
        <div className="flex-1" />
        <ScrollArrow label="Scroll right" d="M4 1v12l7-6z" />
      </div>
    </div>
  );
}

function StatusBar() {
  return (
    <footer className="flex h-[43px] shrink-0 items-center bg-[#f1f1f1] pl-[14px] pr-[39px] text-[22px] text-[#555]">
      <span className="flex-1">Ready</span>
      <Tool label="Normal view" width="w-[77px]" className="bg-[#cbcbcb]">
        <svg width="27" height="27" viewBox="0 0 27 27" fill="none" stroke="#666" strokeWidth="2">
          <path d="M1 1h25v25H1zM1 9h25M1 18h25M9 1v25M18 1v25" />
        </svg>
      </Tool>
      <Tool label="Page Layout view" width="w-[77px]">
        <svg width="28" height="27" viewBox="0 0 28 27" fill="none" stroke="#666" strokeWidth="2">
          <path d="M1 1h26v25H1zM7 5h14v17H7zM10 10h8M10 14h8M10 18h8" />
        </svg>
      </Tool>
      <Tool label="Page Break view" width="w-[78px]">
        <svg width="28" height="27" viewBox="0 0 28 27" fill="none" stroke="#666" strokeWidth="2">
          <path d="M1 1h26v25H1zM1 16h16V1M9 1v15" />
        </svg>
      </Tool>
      <button aria-label="Zoom out" className="ml-[9px] flex h-full w-[22px] items-center">
        <span className="h-[4px] w-[13px] bg-[#666]" />
      </button>
      <input
        type="range"
        aria-label="Zoom"
        defaultValue="50"
        className="h-6 w-[204px] appearance-none bg-transparent [&::-webkit-slider-runnable-track]:h-[2px] [&::-webkit-slider-runnable-track]:bg-[#a9a9a9] [&::-webkit-slider-thumb]:-mt-[11px] [&::-webkit-slider-thumb]:h-[24px] [&::-webkit-slider-thumb]:w-[8px] [&::-webkit-slider-thumb]:appearance-none [&::-webkit-slider-thumb]:bg-[#666]"
      />
      <button aria-label="Zoom in" className="ml-[7px]">
        <svg width="16" height="16" viewBox="0 0 16 16" stroke="#666" strokeWidth="4">
          <path d="M8 0v16M0 8h16" />
        </svg>
      </button>
      <span className="w-[90px] text-right">100%</span>
    </footer>
  );
}

/* ---------- window behind ---------- */

function BackWindow() {
  return (
    <div className="absolute inset-0 flex flex-col overflow-hidden rounded-t-lg rounded-b-md border-2 border-[#e4e4e4] border-b-[#b9b0ab] bg-gradient-to-r from-[#f0f0f0] to-[#d6d6d6]">
      <div className="flex h-[86px] shrink-0 items-start justify-end bg-gradient-to-r from-[#efefef] via-[#b9b9b9] via-35% to-[#c6c6c6] pr-[6px]">
        <div className="flex h-[56px] border-b-2 border-[#8a8a8a]">
          <button className="mr-[12px] flex w-[78px] justify-center border-x-2 border-[#8a8a8a] text-[20px] font-semibold leading-[34px] text-[#555]">
            Clay
          </button>
          <button aria-label="Minimize" className="flex w-[52px] items-start justify-center border-l-2 border-[#8a8a8a] pt-[16px]">
            <span className="h-[10px] w-[24px] border-2 border-[#555] bg-white" />
          </button>
          <button aria-label="Restore" className="flex w-[51px] items-start justify-center border-l-2 border-[#8a8a8a] pt-[4px]">
            <svg width="25" height="22" viewBox="0 0 25 22" fill="#fff" stroke="#555" strokeWidth="2">
              <path d="M1 1h23v20H1zM7 7h11v6H7z" />
            </svg>
          </button>
          <button aria-label="Close" className="flex w-[87px] items-start justify-center border-x-2 border-[#8a8a8a] pt-[4px]">
            <svg width="24" height="22" viewBox="0 0 24 22" fill="none">
              <path d="M4 2l16 18M20 2L4 20" stroke="#555" strokeWidth="6" />
              <path d="M4 2l16 18M20 2L4 20" stroke="#fff" strokeWidth="2" />
            </svg>
          </button>
        </div>
      </div>
      <div className="mx-[4px] flex h-[74px] shrink-0 justify-between border-l-2 border-[#777] bg-[#d9d9d9]">
        <div />
        <div className="w-[40px] bg-gradient-to-b from-[#8c8c8c] to-[#a2a2a2]" />
      </div>
      <div className="mx-[4px] h-[22px] shrink-0 bg-gradient-to-r from-[#8e8e8e] to-[#f2f2f2]" />
      <div className="mx-[5px] mb-[7px] flex flex-1 border-b-2 border-[#6c6c6c]">
        <div className="w-[560px] bg-[#141414]" />
        <div className="flex-1 bg-[#e9e9e9]" />
        <div className="w-[20px] bg-gradient-to-r from-[#8d8d8d] to-[#c8c8c8]" />
      </div>
    </div>
  );
}

export default function App() {
  return (
    <div className="flex h-screen overflow-hidden bg-[#004b86] pb-[14px] pl-[13px] pr-[11px] pt-[12px] font-['Open_Sans',sans-serif]">
      <div className="relative flex min-w-0 flex-1 pb-[25px] pl-[23px] pr-[25px] pt-[25px]">
        <BackWindow />
        <main className="relative flex min-w-0 flex-1 flex-col border-x-2 border-b-[3px] border-[#217346] bg-[#217346] shadow-[6px_4px_12px_rgba(0,0,0,0.5)]">
          <div className="h-[9px] shrink-0 bg-[#1a5a35]" />
          <TitleArt />
          <TitleBar />
          <TabStrip />
          <Ribbon />
          <FormulaBar />
          <div className="relative flex min-h-0 flex-1 bg-[#e6e6e6]">
            <div className="min-w-0 flex-1">
              <Sheet />
            </div>
            <div className="ml-2 mr-2 mt-[2px] flex w-[30px] flex-col bg-[#dadada]">
              <ScrollArrow label="Scroll up" d="M1 10h12L7 3z" />
              <div className="mt-[2px] w-[30px] flex-1 border-2 border-[#b5b5b5] bg-white" />
              <div className="h-[40px]" />
              <ScrollArrow label="Scroll down" d="M1 4h12l-6 8z" />
            </div>
            <Highlight />
          </div>
          <SheetTabs />
          <StatusBar />
        </main>
      </div>
    </div>
  );
}
